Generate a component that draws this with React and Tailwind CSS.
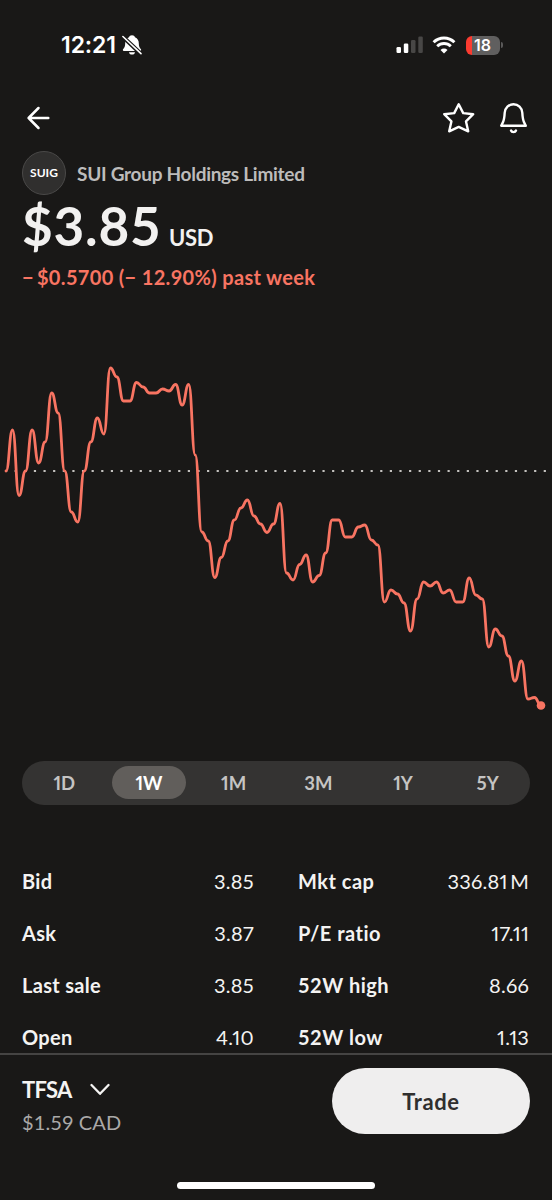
import React from "react";

const START_X = 6;
const END_X = 541;
const PRICES_Y = [
  471, 430, 495.5, 471, 430, 463, 442, 393, 413, 471, 512, 522, 471, 442, 418, 434, 368, 377, 401,
  401, 382.5, 387, 393, 393, 389, 391, 384.5, 405, 384.5, 455, 532, 541, 577.5, 557.5, 541, 520,
  508, 500, 516, 524, 532.5, 524, 503.5, 573, 580, 564.5, 555, 582, 575.5, 553, 520, 520, 537, 537,
  527, 525, 540, 545, 602, 590, 594, 603, 631, 599, 582, 586, 582, 593, 590, 602, 602, 578, 595,
  599, 647, 629, 636, 656, 681, 661, 699, 697.5, 705.5,
];

// Joins evenly spaced samples with S-curves that level off at every sample.
function smoothPath(ys) {
  const h = (END_X - START_X) / (ys.length - 1);
  let d = `M${START_X},${ys[0]}`;
  for (let i = 1; i < ys.length; i++) {
    const x = START_X + i * h;
    d += `C${x - h / 2},${ys[i - 1]} ${x - h / 2},${ys[i]} ${x},${ys[i]}`;
  }
  return d;
}

function StatusBar() {
  return (
    <div className="flex h-[90px] shrink-0 items-center justify-between pr-[49px] pl-[61px] font-[Inter,sans-serif]">
      <div className="flex items-center gap-[6px]">
        <span className="text-[23px] leading-none font-semibold tracking-[-0.100px] text-white">12:21</span>
        <svg width="20" height="22" viewBox="0 0 20 22">
          <path
            d="M10 1.2c-1.6 0-2.7.8-3 2C4.400 4.300 3.200 6.600 3.200 9.200c0 3-.7 4.300-2 5.700-.5.600-.6 2 .7 2h16.200c1.300 0 1.200-1.400.7-2-1.300-1.400-2-2.700-2-5.700 0-2.600-1.200-4.900-3.800-6-.3-1.200-1.400-2-3-2zM7 18.200h6c-.2 1.500-1.300 2.400-3 2.400s-2.800-.9-3-2.400z"
            fill="#fff"
          />
          <path d="M.6 2.400L18.800 19.800" stroke="#191817" strokeWidth="4.200" />
          <path d="M.9 2.500L19 19.600" stroke="#fff" strokeWidth="1.600" strokeLinecap="round" />
        </svg>
      </div>
      <div className="flex items-center">
        <svg width="28" height="18" viewBox="0 0 28 18">
          <rect x="0.500" y="11" width="4.500" height="6" rx="1.300" fill="#fff" />
          <rect x="7.800" y="7.500" width="4.500" height="9.500" rx="1.300" fill="#fff" />
          <rect x="15" y="4" width="4.500" height="13" rx="1.300" fill="#484746" />
          <rect x="22.300" y="0.500" width="4.500" height="16.500" rx="1.300" fill="#484746" />
        </svg>
        <svg className="ml-[8px]" width="24" height="18" viewBox="0 0 24 18" fill="none" stroke="#fff">
          <path d="M1.600 6.300a14.900 14.900 0 0 1 20.800 0" strokeWidth="3" />
          <path d="M5.200 10.300a9.800 9.800 0 0 1 13.600 0" strokeWidth="2.900" />
          <path d="M12 17.400l-3.500-3.500a5 5 0 0 1 7 0z" fill="#fff" stroke="none" />
        </svg>
        <div className="ml-[10px] flex h-[19px] w-[34px] items-center justify-center overflow-hidden rounded-[6px] bg-linear-to-r from-[#fb3b30] from-[19%] to-[#605f5f] to-[19%] text-[16px] leading-none font-semibold text-white">
          18
        </div>
        <div className="ml-[1.500px] h-[6px] w-[2px] rounded-r-full bg-[#5a5959]" />
      </div>
    </div>
  );
}

function Header() {
  return (
    <div className="flex h-[56px] shrink-0 items-center justify-between pr-[22px] pl-[26px]">
      <svg width="26" height="26" viewBox="0 0 26 26" fill="none" stroke="#fff" strokeWidth="2.500" strokeLinecap="round" strokeLinejoin="round">
        <path d="M22.300 13H2.600M12.500 3L2.600 13l9.900 10" />
      </svg>
      <div className="flex items-center gap-[24px]">
        <svg width="36" height="36" viewBox="0 0 36 36" fill="none" stroke="#fff" strokeWidth="2.400" strokeLinejoin="round">
          <path d="M18.700 4.200L23.200 13.100L33.200 14.200L26 21.400L28.200 31.300L18.700 26.900L9.200 31.300L11.400 21.400L4.200 14.200L14.200 13.100Z" />
        </svg>
        <svg width="30" height="36" viewBox="0 0 30 36" fill="none" stroke="#fff" strokeWidth="2.400" strokeLinecap="round" strokeLinejoin="round">
          <path d="M13.500 4.200C8.800 4.200 5 7.800 4.700 12.700C4.400 18 4.200 19.600 2.900 22.400L1.200 25.700H25.800L24.100 22.400C22.800 19.600 22.600 18 22.300 12.700C22 7.800 18.200 4.200 13.500 4.200Z" />
          <path d="M11 30.500C11.800 32.600 15.200 32.600 16 30.500" />
        </svg>
      </div>
    </div>
  );
}

function Summary() {
  return (
    <div className="flex h-[154px] shrink-0 flex-col px-[22px] pt-[5px]">
      <div className="flex h-[44px] items-center">
        <div className="flex size-[44px] items-center justify-center rounded-full border border-[#4a4948] bg-[#302f2e] text-[12px] leading-none font-bold text-white">
          SUIG
        </div>
        <span className="ml-[11px] text-[19px] leading-none font-bold tracking-[-0.280px] text-[#bdbcbb]">SUI Group Holdings Limited</span>
      </div>
      <div className="flex h-[63px] items-baseline text-[#f2f1f0]">
        <span className="text-[53px] leading-[61px] font-bold tracking-[0.800px]">$3.85</span>
        <span className="ml-[7.500px] text-[22px] font-bold tracking-[-0.300px]">USD</span>
      </div>
      <div className="flex h-[37px] items-center text-[20px] leading-none font-bold tracking-[0.330px] whitespace-nowrap text-[#f87462]">
        <span className="mr-[3px]">−</span>$0.5700 (− 12.90%) past week
      </div>
    </div>
  );
}

function Chart() {
  return (
    <svg className="shrink-0" width="552" height="460.500" viewBox="0 300 552 460.500" fill="none">
      <path d="M5 471H546" stroke="#c4c2bf" strokeWidth="1.800" strokeDasharray="2.200 7.420" />
      <path d={smoothPath(PRICES_Y)} stroke="#f87462" strokeWidth="2.800" strokeLinejoin="round" strokeLinecap="round" />
      <circle cx="541" cy="705.500" r="4.300" fill="#f87462" />
    </svg>
  );
}

function RangeTabs() {
  return (
    <div className="mx-[22px] grid h-[44px] shrink-0 grid-cols-6 place-items-center rounded-full bg-[#343332] text-[18.500px] leading-none font-bold text-[#c5c4c3] proportional-nums">
      {["1D", "1W", "1M", "3M", "1Y", "5Y"].map((label) => (
        <div
          key={label}
          className={
            label === "1W"
              ? "flex h-[33px] w-[74px] items-center justify-center rounded-full bg-[#615e5b] pt-[2px] text-white"
              : "flex h-[33px] w-[74px] items-center justify-center pt-[2px]"
          }
        >
          {label}
        </div>
      ))}
    </div>
  );
}

const STATS = [
  ["Bid", "3.85", "Mkt cap", "336.81\u2009M"],
  ["Ask", "3.87", "P/E ratio", "17.11"],
  ["Last sale", "3.85", "52W high", "8.66"],
  ["Open", "4.10", "52W low", "1.13"],
];

function Stats() {
  return (
    <div className="h-[248.500px] shrink-0 overflow-hidden pt-[50px] pr-[23px] pl-[22px] text-[20px] leading-none text-[#f4f3f2]">
      {STATS.map(([a, av, b, bv]) => (
        <div key={a} className="grid h-[52px] grid-cols-[232px_231px] items-center gap-x-[44px]">
          <div className="flex justify-between">
            <span className="font-bold tracking-[0.300px]">{a}</span>
            <span className="font-normal tracking-[0.300px] proportional-nums">{av}</span>
          </div>
          <div className="flex justify-between">
            <span className="font-bold tracking-[0.500px]">{b}</span>
            <span className="font-normal tracking-[0.200px] proportional-nums">{bv}</span>
          </div>
        </div>
      ))}
    </div>
  );
}

function Footer() {
  return (
    <div className="flex grow flex-col border-t-2 border-[#454443] bg-[#191817]">
      <div className="flex items-start justify-between pt-[13px] pr-[22px] pl-[22px]">
        <div>
          <div className="mt-[10px] flex items-center text-[22px] leading-[24px] font-bold tracking-[-0.700px] text-[#f4f3f2]">
            TFSA
            <svg className="ml-[18px]" width="20" height="14" viewBox="0 0 20 14" fill="none" stroke="#f4f3f2" strokeWidth="2.300" strokeLinecap="round" strokeLinejoin="round">
              <path d="M1.500 2L10 10.800L18.500 2" />
            </svg>
          </div>
          <div className="mt-[8px] text-[20px] leading-[24px] tracking-[0.100px] text-[#aaa9a8]">$1.59 CAD</div>
        </div>
        <button className="h-[66px] w-[198px] rounded-full bg-[#efeeee] pt-[2px] text-[22px] leading-none font-bold tracking-[0.600px] text-[#302f2e]">Trade</button>
      </div>
      <div className="mx-auto mt-[48px] h-[7px] w-[198px] rounded-full bg-white" />
    </div>
  );
}

export default function App() {
  return (
    <div className="flex h-[1200px] w-[552px] flex-col overflow-hidden bg-[#191817] font-[Lato,sans-serif]">
      <StatusBar />
      <Header />
      <Summary />
      <Chart />
      <RangeTabs />
      <Stats />
      <Footer />
    </div>
  );
}
